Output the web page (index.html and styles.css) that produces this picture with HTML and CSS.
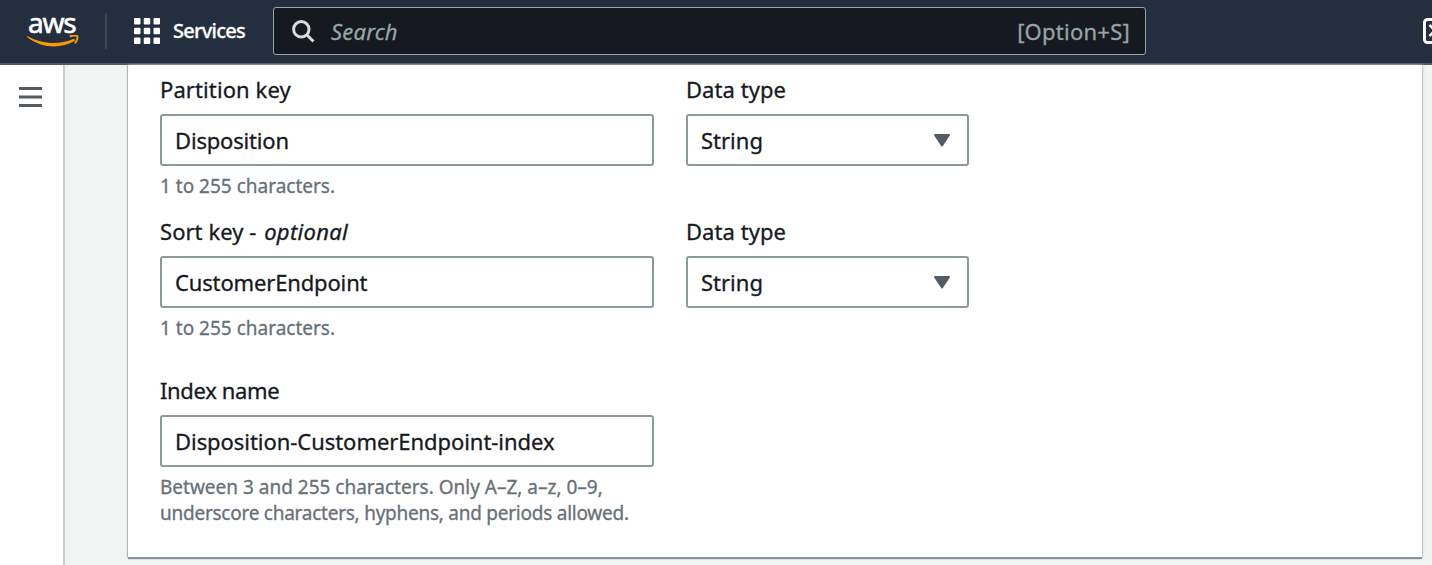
FILE: index.html
```html
<!DOCTYPE html>
<html lang="en">
<head>
<meta charset="utf-8">
<title>Create index</title>
<link rel="stylesheet" href="styles.css">
</head>
<body>
<header class="topbar">
  <div class="logo">
    <span class="logo-text">aws</span>
    <svg class="logo-smile" width="54" height="14" viewBox="0 0 54 14"><path d="M.8 1.200C14 8.600 31 10.400 45.500 4.200C47.500 3.400 48.800 5 47 6.300C33 14.200 14 13 .4 2.200C-.2 1.500.1.900.8 1.200Z" fill="#f90"/><path d="M42.800 1.700C45.500.2 49.400.2 50.200 1.200C50.900 2.400 49.900 6.300 47.800 8.300" fill="none" stroke="#f90" stroke-width="2"/></svg>
  </div>
  <div class="divider"></div>
  <svg class="grid-icon" width="26" height="26" viewBox="0 0 26 26" fill="#fff"><rect width="6.500" height="6.500" rx="1"/><rect x="9.750" width="6.500" height="6.500" rx="1"/><rect x="19.500" width="6.500" height="6.500" rx="1"/><rect y="9.750" width="6.500" height="6.500" rx="1"/><rect x="9.750" y="9.750" width="6.500" height="6.500" rx="1"/><rect x="19.500" y="9.750" width="6.500" height="6.500" rx="1"/><rect y="19.500" width="6.500" height="6.500" rx="1"/><rect x="9.750" y="19.500" width="6.500" height="6.500" rx="1"/><rect x="19.500" y="19.500" width="6.500" height="6.500" rx="1"/></svg>
  <span class="services">Services</span>
  <div class="search">
    <svg width="23" height="23" viewBox="0 0 23 23" fill="none" stroke="#d5dbdb" stroke-width="3"><circle cx="9.300" cy="9.300" r="7.700"/><path d="M14.800 14.800L21.500 21.500"/></svg>
    <span class="placeholder">Search</span>
    <span class="shortcut">[Option+S]</span>
  </div>
  <svg class="shell-icon" width="9" height="26" viewBox="0 0 9 26" fill="none" stroke="#fff"><rect x="1.500" y="1.500" width="23" height="23" rx="3" stroke-width="3"/><path d="M6.500 7L12 12.500L6.500 18" stroke-width="2.500"/></svg>
</header>
<div class="body">
  <nav class="sidebar">
    <svg width="23" height="20" viewBox="0 0 23 20" fill="#545b64"><rect width="23" height="3"/><rect y="8.500" width="23" height="3"/><rect y="17" width="23" height="3"/></svg>
  </nav>
  <main class="content">
    <section class="panel">
      <div class="row">
        <div class="field">
          <div class="label l-partition">Partition key</div>
          <div class="control v-disposition">Disposition</div>
          <div class="hint">1 to 255 characters.</div>
        </div>
        <div class="field">
          <div class="label">Data type</div>
          <div class="control select"><span>String</span><svg width="18" height="15" viewBox="0 0 18 15"><path d="M2 2H16L9 12.500Z" fill="#545b64" stroke="#545b64" stroke-width="2" stroke-linejoin="round"/></svg></div>
        </div>
      </div>
      <div class="row">
        <div class="field">
          <div class="label l-sort">Sort key - <em>optional</em></div>
          <div class="control v-endpoint">CustomerEndpoint</div>
          <div class="hint">1 to 255 characters.</div>
        </div>
        <div class="field">
          <div class="label">Data type</div>
          <div class="control select"><span>String</span><svg width="18" height="15" viewBox="0 0 18 15"><path d="M2 2H16L9 12.500Z" fill="#545b64" stroke="#545b64" stroke-width="2" stroke-linejoin="round"/></svg></div>
        </div>
      </div>
      <div class="row row-index">
        <div class="field">
          <div class="label l-index">Index name</div>
          <div class="control v-index">Disposition-CustomerEndpoint-index</div>
          <div class="hint">Between 3 and 255 characters. Only A–Z, a–z, 0–9,</div>
          <div class="hint h-index2">underscore characters, hyphens, and periods allowed.</div>
        </div>
      </div>
    </section>
  </main>
</div>
</body>
</html>
```
FILE: styles.css
```css
* { box-sizing: border-box; }
body {
  margin: 0;
  height: 565px;
  overflow: hidden;
  display: flex;
  flex-direction: column;
  font-family: "Noto Sans", "Open Sans", sans-serif;
  color: #16191f;
  background: #f2f3f3;
  -webkit-text-stroke: .3px;
}
svg { display: block; flex: none; }
.topbar {
  flex: none;
  height: 65px;
  display: flex;
  align-items: flex-start;
  background: #232f3e;
  border-bottom: 2px solid #4f5b67;
  color: #fff;
}
.logo { width: 78px; padding: 9px 0 0 27px; flex: none; }
.logo-text {
  display: block;
  height: 26px;
  padding-left: 1px;
  font-size: 28px;
  line-height: 26px;
  letter-spacing: -1.200px;
  -webkit-text-stroke: .6px;
}
.divider { flex: none; width: 2px; height: 36px; margin: 13px 27px 0 27px; background: #414750; }
.grid-icon { margin-top: 18px; }
.services { width: 100px; flex: none; margin: 17px 0 0 13px; font-size: 20px; line-height: 28px; font-weight: 500; letter-spacing: -.75px; }
.search {
  flex: none;
  width: 873px;
  height: 48px;
  margin-top: 7px;
  padding: 0 15px 0 18px;
  display: flex;
  align-items: center;
  background: #16191f;
  border: 1.500px solid #95a5a6;
  border-radius: 3px;
  color: #95a5a6;
  font-size: 22px;
}
.placeholder { margin-left: 16px; font-style: italic; letter-spacing: .2px; }
.shortcut { margin-left: auto; letter-spacing: .25px; }
.shell-icon { margin: 18px 0 0 auto; }
.body { flex: 1; display: flex; min-height: 0; }
.sidebar {
  flex: none;
  width: 65px;
  padding: 22px 0 0 19px;
  background: #fff;
  border-right: 2px solid #c9cdcd;
}
.content { flex: 1; padding: 0 10px 7px 63px; }
.panel {
  height: 492px;
  padding: 10px 32px 0;
  background: #fff;
  box-shadow: 0 2px 1px #87929b, -1px 0 1px #b8bdbf, 1px 0 2px #c4c8ca;
}
.row { display: flex; gap: 32px; height: 142.400px; }
.row-index { margin-top: 16.200px; }
.field { width: 494px; flex: none; }
.label { height: 28px; line-height: 28px; font-size: 22px; letter-spacing: .05px; white-space: nowrap; }
.control {
  height: 52px;
  margin: 11px 0 7px;
  padding: 0 13px;
  display: flex;
  align-items: center;
  border: 2px solid #8c9a9b;
  border-radius: 3px;
  font-size: 22px;
  white-space: nowrap;
}
.select { width: 283px; justify-content: space-between; padding-right: 16px; line-height: 28px; }
.select span { margin-top: -1px; }
.hint { height: 26px; line-height: 26px; font-size: 19px; color: #687078; white-space: nowrap; }
.l-partition { letter-spacing: .1px; }
.l-sort { letter-spacing: .05px; }
.l-sort em { letter-spacing: .3px; margin-left: 2px; }
.l-index { letter-spacing: -.35px; }
.v-disposition { letter-spacing: -.18px; }
.v-endpoint { letter-spacing: -.15px; }
.v-index { letter-spacing: -.05px; }
.h-index2 { letter-spacing: -.25px; }
```
